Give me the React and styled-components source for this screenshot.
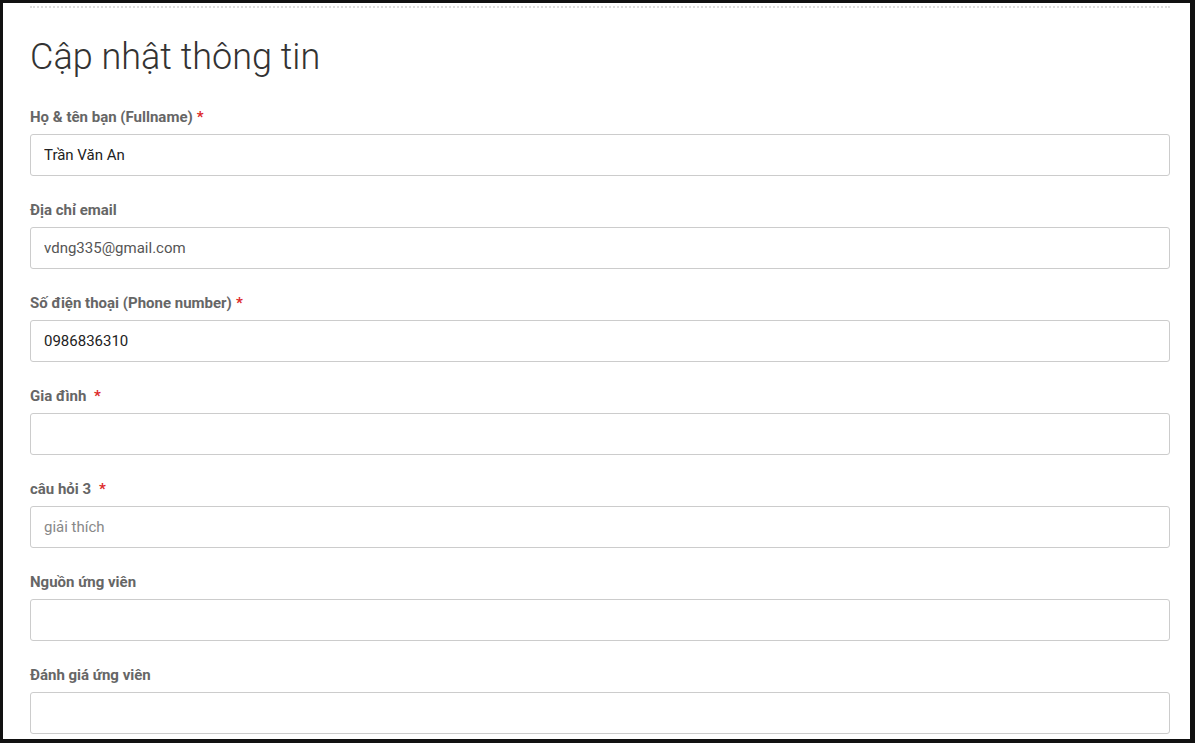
import React from 'react';
import styled, { createGlobalStyle } from 'styled-components';

const GlobalStyle = createGlobalStyle`
  html, body {
    margin: 0;
    padding: 0;
    background: #111111;
  }
  body {
    font-family: Roboto, "Liberation Sans", Arial, sans-serif;
  }
`;

const Frame = styled.div`
  margin: 3px 5px 0 3px;
  height: 736px;
  background: #ffffff;
  overflow: hidden;
  padding: 3px 20px 0 27px;
  box-sizing: border-box;
`;

const Divider = styled.div`
  border-top: 2px dotted #dddddd;
`;

const Heading = styled.h1`
  margin: 29px 0 30px;
  font-size: 36px;
  line-height: 40px;
  font-weight: 300;
  color: #333333;
`;

const Form = styled.form`
  display: flex;
  flex-direction: column;
  gap: 24px;
`;

const Field = styled.div`
  display: flex;
  flex-direction: column;
  gap: 7px;
`;

const Label = styled.label`
  font-size: 15px;
  line-height: 20px;
  font-weight: 700;
  color: #666666;
`;

const Required = styled.span`
  color: #dd2a2a;
  margin-left: ${(p) => p.$gap}px;
`;

const Input = styled.input`
  box-sizing: border-box;
  width: 100%;
  height: 42px;
  padding: 0 13px;
  border: 1px solid #cccccc;
  border-radius: 3px;
  font-family: Roboto, "Liberation Sans", Arial, sans-serif;
  font-size: 15px;
  color: ${(p) => (p.$muted ? '#555555' : '#222222')};
  background: #ffffff;
  outline: none;

  &::placeholder {
    color: #888888;
  }
`;

const fields = [
  { label: 'Họ & tên bạn (Fullname)', required: true, gap: 4, value: 'Trần Văn An' },
  { label: 'Địa chỉ email', value: 'vdng335@gmail.com', muted: true },
  { label: 'Số điện thoại (Phone number)', required: true, gap: 4, value: '0986836310' },
  { label: 'Gia đình ', required: true, gap: 4, value: '' },
  { label: 'câu hỏi 3 ', required: true, gap: 4, value: '', placeholder: 'giải thích' },
  { label: 'Nguồn ứng viên', value: '' },
  { label: 'Đánh giá ứng viên', value: '' },
];

const App = () => (
  <>
    <GlobalStyle />
    <Frame>
      <Divider />
      <Heading>Cập nhật thông tin</Heading>
      <Form onSubmit={(e) => e.preventDefault()}>
        {fields.map((f) => (
          <Field key={f.label}>
            <Label>
              {f.label}
              {f.required && <Required $gap={f.gap}>*</Required>}
            </Label>
            <Input
              type="text"
              defaultValue={f.value}
              placeholder={f.placeholder}
              $muted={f.muted}
            />
          </Field>
        ))}
      </Form>
    </Frame>
  </>
);

export default App;
